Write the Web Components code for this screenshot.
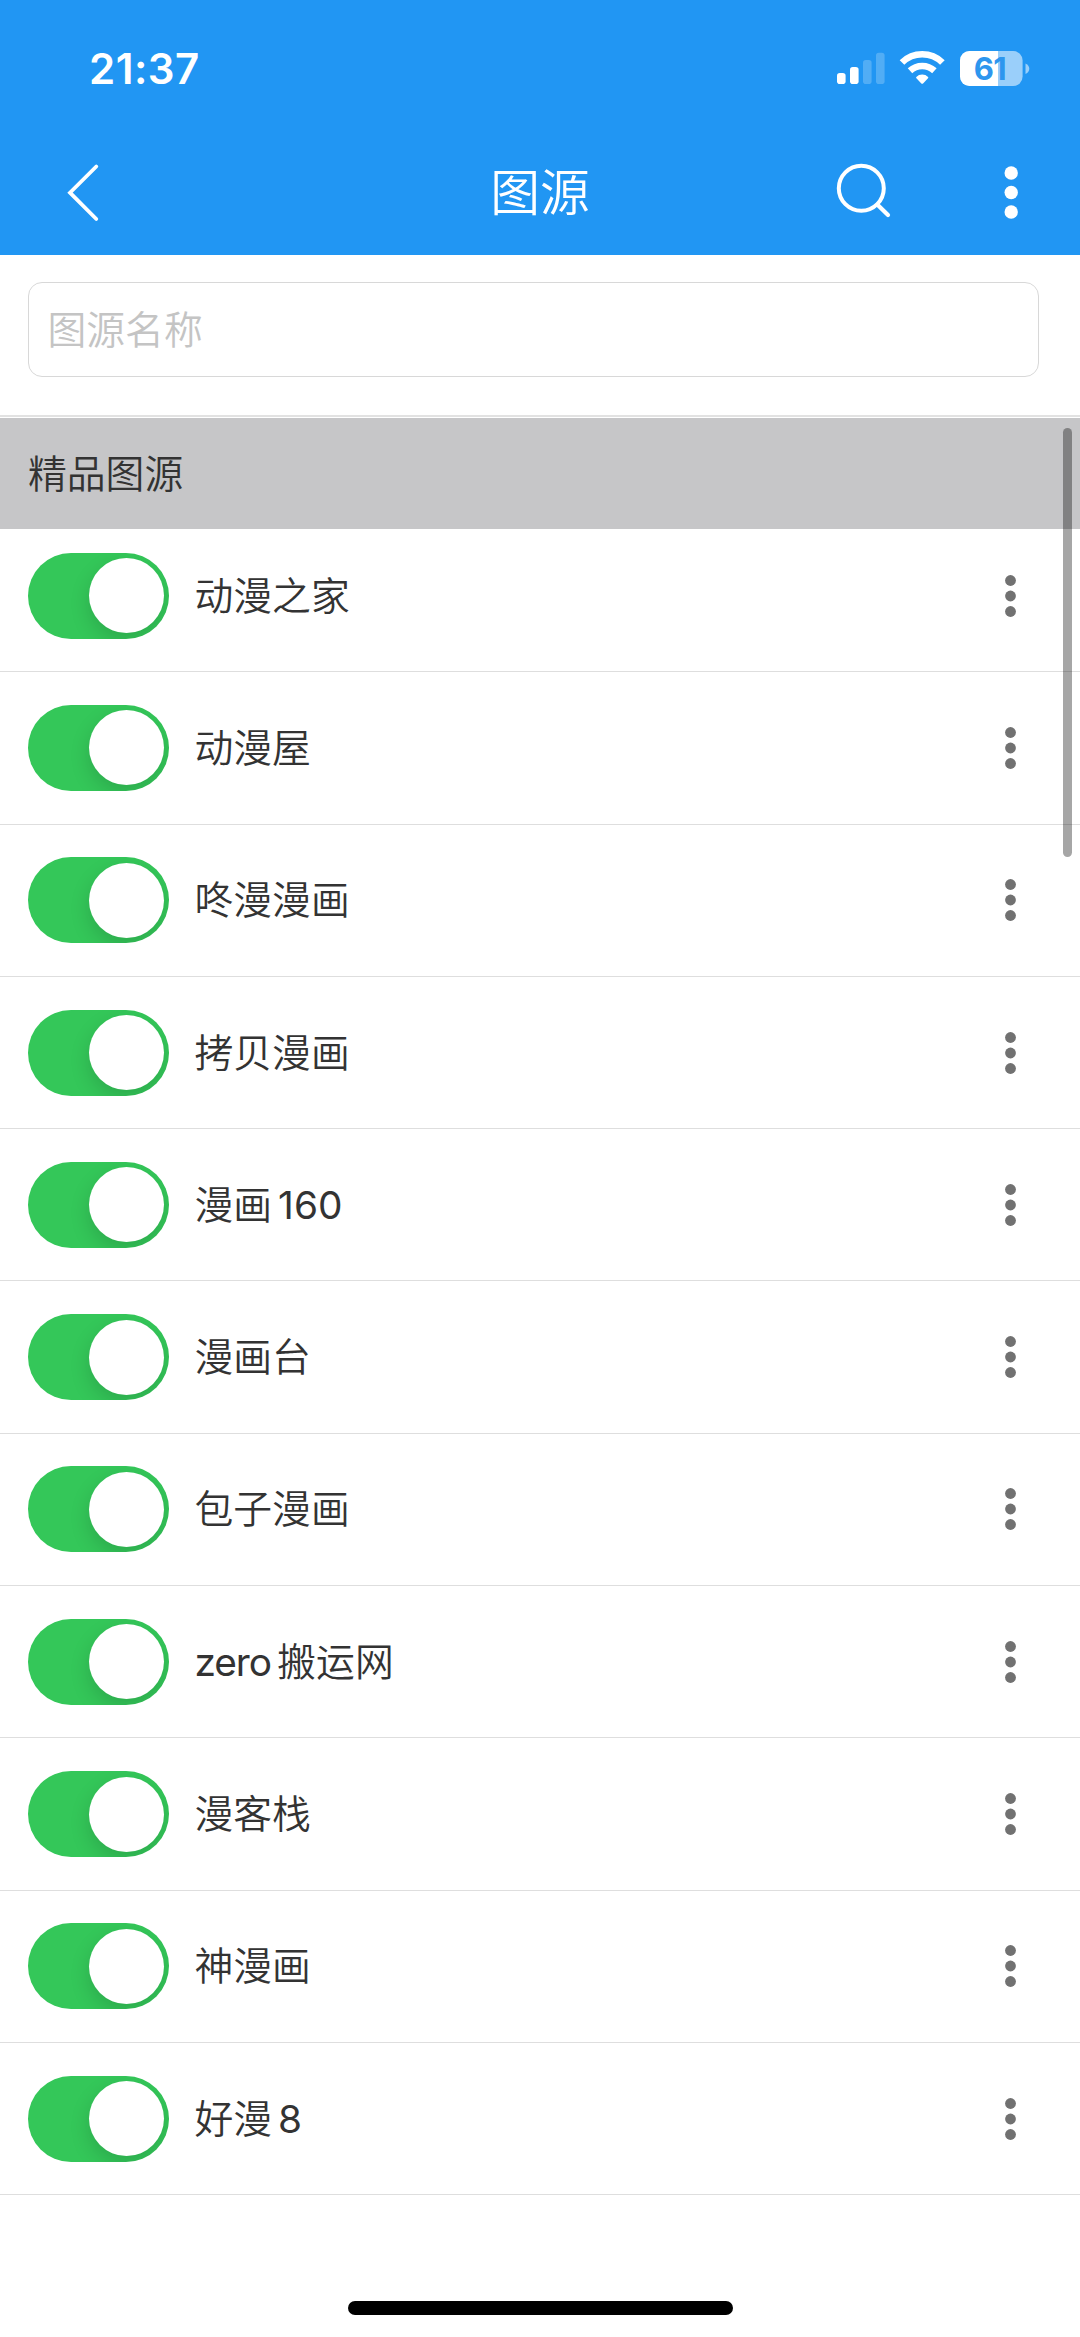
<!DOCTYPE html>
<html lang="zh-CN">
<head>
<meta charset="utf-8">
<title>图源</title>
<style>
html,body{margin:0;padding:0;background:#fff}
body{font-family:Inter,"Noto Sans CJK SC",sans-serif;font-weight:350;color:#333}
</style>
</head>
<body>
<source-page></source-page>
<script>
const define = (name, html) => customElements.define(name, class extends HTMLElement {
  constructor() {
    super();
    this.attachShadow({mode: 'open'}).innerHTML = html;
  }
});

define('status-bar', `
<style>
:host{display:flex;justify-content:space-between;height:130px;color:#fff}
.time{padding:43px 0 0 89px;font-size:42px;line-height:52px;font-weight:570;letter-spacing:.5px}
svg{display:block;width:200px;height:50px;margin:43px 47px 0 0}
</style>
<div class="time">21:37</div>
<svg viewBox="833 43 200 50" fill="#fff">
  <rect x="837" y="73" width="8.6" height="11" rx="2.8"/>
  <rect x="850" y="67" width="8.6" height="17" rx="2.8"/>
  <rect x="863" y="60" width="8.6" height="24" rx="2.8" opacity=".22"/>
  <rect x="876" y="52.700" width="8.600" height="31.300" rx="2.8" opacity=".22"/>
  <g fill="none" stroke="#fff" stroke-width="6.6">
    <path d="M902 62.500A29 29 0 0 1 942.400 62.500"/>
    <path d="M910 70.700A18 18 0 0 1 934.400 70.700"/>
  </g>
  <path d="M916.300 77A8.500 8.500 0 0 1 928.100 77Q928.600 77.700 928 78.300L923.300 83.200Q922.200 84.200 921.100 83.200L916.400 78.300Q915.800 77.700 916.300 77Z"/>
  <rect x="960" y="51" width="62.600" height="35" rx="9.500" opacity=".55"/>
  <path d="M969.500 51H998V86H969.500A9.500 9.500 0 0 1 960 76.500V60.500A9.500 9.500 0 0 1 969.500 51Z"/>
  <path d="M1025.500 63.500Q1029.300 65.500 1029.300 68.700T1025.500 74Z" opacity=".55"/>
  <text x="990" y="79.600" fill="#2d96ee" text-anchor="middle" font-size="31" font-weight="650" font-family="Inter" letter-spacing="-.4">61</text>
</svg>`);

define('nav-bar', `
<style>
:host{display:grid;grid-template-columns:1fr auto 1fr;align-items:center;height:124.500px;color:#fff}
svg{display:block;fill:none;stroke:#fff;stroke-linecap:round}
.t{font-size:49.800px;line-height:72px;padding-top:1px}
.r{display:flex;justify-content:flex-end}
</style>
<svg width="140" height="124" viewBox="0 130 140 124" stroke-width="3.800"><path d="M96.300 166.500L70 192.700L96.300 219"/></svg>
<div class="t"><slot></slot></div>
<div class="r"><svg width="250" height="124" viewBox="830 130 250 124">
<circle cx="861.300" cy="188.200" r="22.500" stroke-width="4"/><path stroke-width="4.200" d="M877.500 204.700L888 215"/>
<g fill="#fff" stroke="none"><circle cx="1011.200" cy="173" r="6.700"/><circle cx="1011.200" cy="192.500" r="6.700"/><circle cx="1011.200" cy="212" r="6.700"/></g></svg></div>`);

define('search-field', `
<style>
:host{display:block;padding:27px 41px 38.500px 27.500px;border-bottom:2px solid #e2e2e2;margin-bottom:1px}
div{box-sizing:border-box;height:95px;border:1.500px solid #d8d8d8;border-radius:14px;padding:0 19px;font-size:38.800px;line-height:93px;color:#c4c4c4}
</style><div><slot></slot></div>`);

define('section-header', `
<style>
:host{display:block;position:relative;z-index:1;height:111px;line-height:111px;padding-left:28px;background:#c6c6c8;font-size:38.800px}
</style><slot></slot>`);

define('toggle-switch', `
<style>
:host{display:flex;justify-content:flex-end;box-sizing:border-box;width:141.500px;height:86px;padding:5.500px;border-radius:43px;background:#34c759;overflow:hidden}
i{width:75px;height:75px;border-radius:50%;background:#fff;box-shadow:0 8px 20px rgba(0,0,0,.15)}
</style><i></i>`);

define('source-row', `
<style>
:host{display:flex;align-items:center;box-sizing:border-box;height:152.300px;padding:0 63px 0 27.500px;border-bottom:1.300px solid #dedede}
.n{flex:1;padding-left:25.500px;font-size:38.800px;line-height:56px}
svg{display:block;fill:#717171}
</style>
<toggle-switch></toggle-switch>
<div class="n"><slot></slot></div>
<svg width="13" height="44" viewBox="0 0 13 44"><circle cx="6.500" cy="6.500" r="5.400"/><circle cx="6.500" cy="22" r="5.400"/><circle cx="6.500" cy="37.500" r="5.400"/></svg>`);

define('source-page', `
<style>
:host{display:flex;flex-direction:column;box-sizing:border-box;width:1080px;height:2337px;overflow:hidden;background:#fff}
header{background:#2196f3}
main{position:relative;flex:1}
.list{margin-top:-9px}
.bar{position:absolute;z-index:2;right:8.500px;top:10px;width:8.300px;height:429px;border-radius:5px;background:rgba(0,0,0,.35)}
footer{display:flex;justify-content:center;padding-bottom:22px}
footer i{width:385px;height:14px;border-radius:7px;background:#000}
.gl,.gr{font-weight:400}
.gl{margin-left:6px}
.gr{margin-right:6.500px;letter-spacing:-1.100px}
</style>
<header><status-bar></status-bar><nav-bar>图源</nav-bar></header>
<search-field>图源名称</search-field>
<main>
  <section-header>精品图源</section-header>
  <div class="list">
    <source-row>动漫之家</source-row>
    <source-row>动漫屋</source-row>
    <source-row>咚漫漫画</source-row>
    <source-row>拷贝漫画</source-row>
    <source-row>漫画<span class="gl">160</span></source-row>
    <source-row>漫画台</source-row>
    <source-row>包子漫画</source-row>
    <source-row><span class="gr">zero</span>搬运网</source-row>
    <source-row>漫客栈</source-row>
    <source-row>神漫画</source-row>
    <source-row>好漫<span class="gl">8</span></source-row>
  </div>
  <div class="bar"></div>
</main>
<footer><i></i></footer>`);
</script>
</body>
</html>
